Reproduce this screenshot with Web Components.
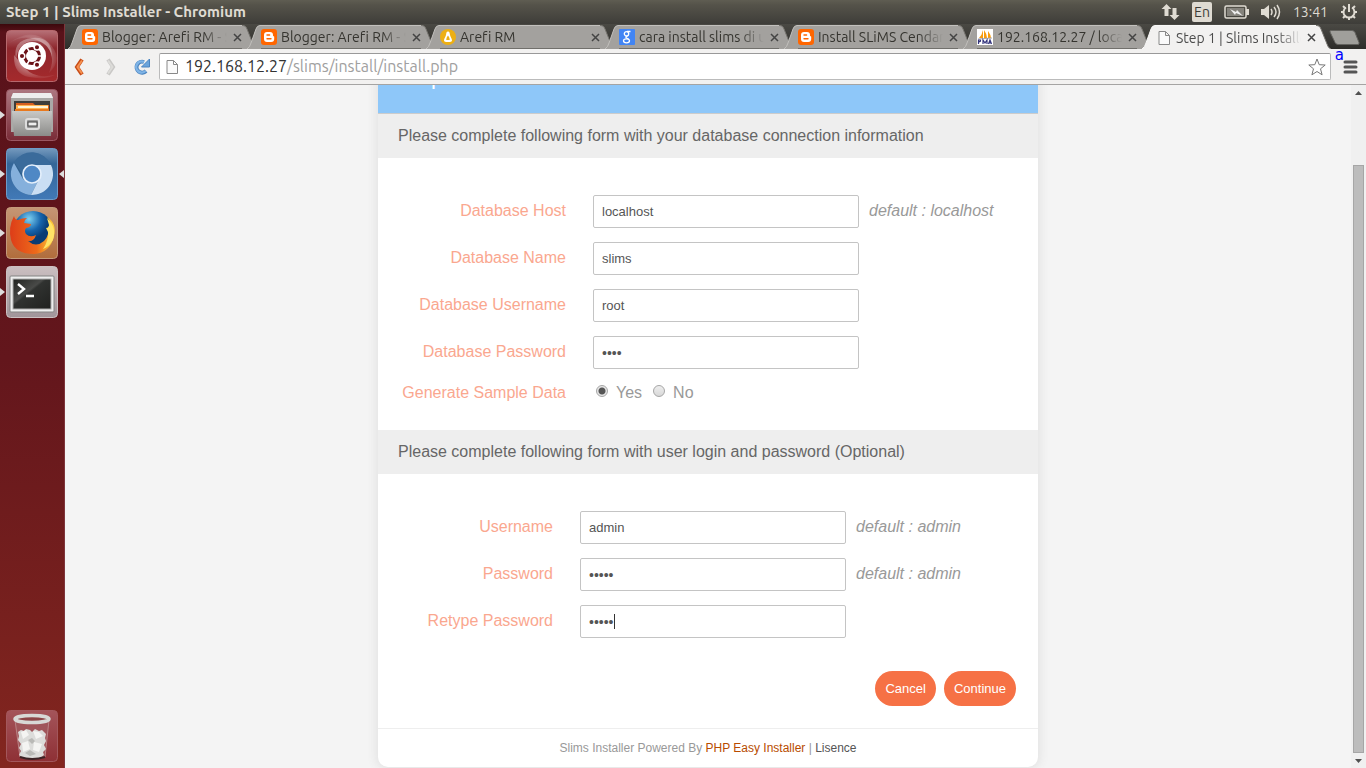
<!DOCTYPE html>
<html lang="en">
<head>
<meta charset="utf-8">
<title>Step 1 | Slims Installer</title>
<style>
	html, body {
		height: 100%;
		margin: 0;
	}
	body {
		display: flex;
		flex-direction: column;
		overflow: hidden;
		background: #f4f4f4;
		font-family: "Liberation Sans", Arial, sans-serif;
		--ui-font: Ubuntu, "Noto Sans", "Open Sans", sans-serif;
	}
	.workspace {
		display: flex;
		flex: 1;
		min-height: 0;
	}
	.browser {
		display: flex;
		flex-direction: column;
		flex: 1;
		min-width: 0;
	}
	.page {
		display: flex;
		flex: 1;
		min-height: 0;
	}
</style>
</head>
<body>

<desktop-panel>Step 1 | Slims Installer - Chromium</desktop-panel>

<div class="workspace">
	<app-launcher>
		<launcher-item icon="ubuntu" label="Dash"></launcher-item>
		<launcher-item icon="files" label="Files" running></launcher-item>
		<launcher-item icon="chromium" label="Chromium" running active></launcher-item>
		<launcher-item icon="firefox" label="Firefox" running></launcher-item>
		<launcher-item icon="terminal" label="Terminal" running></launcher-item>
		<launcher-item icon="trash" label="Trash" slot="bottom"></launcher-item>
	</app-launcher>

	<div class="browser">
		<tab-strip>
			<browser-tab icon="blogger">Blogger: Arefi RM - Semua</browser-tab>
			<browser-tab icon="blogger">Blogger: Arefi RM - Semua</browser-tab>
			<browser-tab icon="linux">Arefi RM</browser-tab>
			<browser-tab icon="google">cara install slims di ubuntu</browser-tab>
			<browser-tab icon="blogger">Install SLiMS Cendana</browser-tab>
			<browser-tab icon="pma">192.168.12.27 / localhost</browser-tab>
			<browser-tab icon="page" active>Step 1 | Slims Installer</browser-tab>
		</tab-strip>
		<browser-toolbar host="192.168.12.27" path="/slims/install/install.php"></browser-toolbar>

		<div class="page">
			<installer-card heading="Step 1">
				<form-section heading="Please complete following form with your database connection information" style="--label-width: 168px">
					<form-row label="Database Host" value="localhost" hint="default : localhost"></form-row>
					<form-row label="Database Name" value="slims"></form-row>
					<form-row label="Database Username" value="root"></form-row>
					<form-row label="Database Password" value="root" type="password"></form-row>
					<radio-row label="Generate Sample Data" options="Yes,No" selected="Yes"></radio-row>
				</form-section>
				<form-section heading="Please complete following form with user login and password (Optional)" style="--label-width: 155px">
					<form-row label="Username" value="admin" hint="default : admin"></form-row>
					<form-row label="Password" value="admin" type="password" hint="default : admin"></form-row>
					<form-row label="Retype Password" value="admin" type="password" editing></form-row>
				</form-section>
				<action-button slot="actions">Cancel</action-button>
				<action-button slot="actions">Continue</action-button>
			</installer-card>
			<page-scrollbar></page-scrollbar>
		</div>
	</div>
</div>

<script>
const icons = {
	blogger: `<svg width="16" height="16" viewBox="0 0 16 16"><rect width="16" height="16" rx="3" fill="#ff6600"/><path d="M6 3h3a3 3 0 0 1 3 3v.6q0 .6.6.6t.6.6V10a3 3 0 0 1-3 3H6a3 3 0 0 1-3-3V6a3 3 0 0 1 3-3z" fill="#fff"/><path d="M6 6h2.600M6 9.800h4" stroke="#ff6600" stroke-width="1.400" stroke-linecap="round"/></svg>`,
	linux: `<svg width="16" height="16" viewBox="0 0 16 16"><circle cx="8" cy="8" r="8" fill="#edaf13"/><path d="M8 2.500c1.600 0 1.700 1.700 2 3.500.3 1.800 2 3.500 2 5.500 0 1.500-1.500 1.500-4 1.500s-4 0-4-1.500c0-2 1.700-3.700 2-5.500.3-1.800.4-3.500 2-3.500z" fill="#fff"/><path d="M8 6.500c1 1.300 1.700 2.800 1.700 4.500H6.300c0-1.700.7-3.200 1.700-4.500z" fill="#edaf13"/></svg>`,
	google: `<svg width="16" height="16" viewBox="0 0 16 16"><rect width="16" height="16" rx="1" fill="#4285f4"/><g fill="none" stroke="#fff" stroke-width="1.300"><ellipse cx="7.500" cy="4.800" rx="2.200" ry="2.200"/><path d="M8 2.500h3.500M8.500 7q-2.500 1-1 2t2.500 1.300"/><ellipse cx="7.500" cy="11.800" rx="3" ry="2"/></g></svg>`,
	pma: `<svg width="16" height="16" viewBox="0 0 16 16"><rect width="16" height="16" fill="#fff"/><path d="M6 1v8H2q3-3 4-8zM7 1q3 4 3 8H7zM11 2q3 4 3 7h-3z" fill="#f89c0e"/><path d="M1 10l14-1" stroke="#aaa"/><path d="M1.500 15v-4h1.800q1 1.500-1.800 2M6 15v-4l2 3 2-3v4M11.500 15l1.500-4 1.500 4m-2.300-1.200h1.700" fill="none" stroke="#34347c" stroke-width="1.200"/></svg>`,
	page: `<svg width="16" height="16" viewBox="0 0 16 16"><path d="M3 1.500h6.500l4 4v9H3zM9.500 1.500v4h4" fill="#fafafa" stroke="#888"/></svg>`,
	ubuntu: `<svg width="52" height="52" viewBox="0 0 52 52"><defs><linearGradient id="a" x2="0" y2="1"><stop stop-color="#b77178"/><stop offset=".35" stop-color="#8e272d"/><stop offset="1" stop-color="#a52a2c"/></linearGradient><radialGradient id="b"><stop offset=".45" stop-color="#fff" stop-opacity=".5"/><stop offset="1" stop-color="#fff" stop-opacity=".08"/></radialGradient></defs><rect x=".5" y=".5" width="51" height="51" rx="4" fill="url(#a)" stroke="#b6686d"/><path d="M2 14Q25-4 42 12t1 31Q52 22 35 12T2 14zM8 25q-1 19 15 22t26-2q-20 4-29-6T8 25z" fill="url(#b)"/><path d="M10 30Q6 10 26 8t20 19Q42 10 27 11T10 30z" fill="#fff" opacity=".3"/><circle cx="26" cy="26" r="14" fill="#fff"/><circle cx="26" cy="26" r="7.500" fill="none" stroke="#6b1217" stroke-width="3.200"/><g stroke="#fff" stroke-width="1.500"><path d="M26 26l11 0M26 26l-6-10M26 26l-6 10"/><circle cx="26" cy="26" r="5" fill="#fff"/><circle cx="16" cy="26" r="2.800" fill="#6b1217"/><circle cx="31" cy="17.300" r="2.800" fill="#6b1217"/><circle cx="31" cy="34.700" r="2.800" fill="#6b1217"/></g></svg>`,
	files: `<svg width="52" height="52" viewBox="0 0 52 52"><defs><linearGradient id="a" x2="0" y2="1"><stop stop-color="#ad7881"/><stop offset="1" stop-color="#792b37"/></linearGradient><linearGradient id="b" x2="0" y2="1"><stop stop-color="#c8c8c6"/><stop offset="1" stop-color="#8b8b89"/></linearGradient></defs><rect x=".5" y=".5" width="51" height="51" rx="4" fill="url(#a)" stroke="#9b5762"/><path d="M7 4h38l2 5v34H5V9z" fill="#aaa9a7"/><path d="M7 4h38l2 5H5z" fill="#eee"/><path d="M8 12h36v12H8z" fill="#3e3d3b"/><path d="M10 14h17l2 2h14v6H10z" fill="#d65f20"/><path d="M10 16h32v6H10z" fill="#ffb452"/><path d="M12 17h30v2H12z" fill="#fff4d8"/><path d="M9 20h34v2H9z" fill="#e8791e"/><path d="M6 22h40l-1 25H8z" fill="url(#b)"/><rect x="20" y="30" width="13" height="10" rx="2" fill="#999" stroke="#ddd" stroke-width="2"/><rect x="22" y="33" width="9" height="4" fill="#eee" stroke="#444"/></svg>`,
	chromium: `<svg width="52" height="52" viewBox="0 0 52 52"><defs><linearGradient id="a" x2="0" y2="1"><stop stop-color="#7499bd"/><stop offset=".3" stop-color="#346698"/><stop offset="1" stop-color="#4179b7"/></linearGradient></defs><rect x=".5" y=".5" width="51" height="51" rx="4" fill="url(#a)" stroke="#6d9bc8"/><circle cx="26" cy="26" r="21" fill="#30618f"/><path d="M8 15A21 21 0 0 0 25 47l8-16q-8 7-16 0z" fill="#85b0dc"/><path d="M26 17h19a21 21 0 0 1-20 30l10-20q1-6-9-10z" fill="#cadef3"/><path d="M8 14A21 21 0 0 1 45 17H26q-8 0-9 10z" fill="#3a6b9b"/><circle cx="26" cy="26" r="9" fill="#4f88c5" stroke="#e4effb" stroke-width="1.700"/></svg>`,
	firefox: `<svg width="52" height="52" viewBox="0 0 52 52"><defs><linearGradient id="a" x2="0" y2="1"><stop stop-color="#c59675"/><stop offset="1" stop-color="#b16d3c"/></linearGradient><radialGradient id="b" cx=".4" cy=".2"><stop stop-color="#7ed2f2"/><stop offset=".6" stop-color="#1664ac"/><stop offset="1" stop-color="#093c74"/></radialGradient><linearGradient id="c"><stop stop-color="#dd3d18"/><stop offset=".6" stop-color="#ee6b1b"/><stop offset="1" stop-color="#ffd43c"/></linearGradient></defs><rect x=".5" y=".5" width="51" height="51" rx="4" fill="url(#a)" stroke="#c49a7c"/><circle cx="27" cy="24" r="20" fill="url(#b)"/><path d="M8 9q1 4 4 4 4-2 9-2-3 2-3 5l7 1q0 3-5 4-2 3 0 6 4 4 10 1-2 7-8 6 8 7 16 0 6-6 4-15 2 1 2 4 2-7-3-13 10 6 7 19-4 17-20 18Q9 47 5 33 2 20 8 9z" fill="url(#c)"/><path d="M41 11q10 9 6 22-5 8-10 9 6-9 5-17l-2-4q3 0 3-3z" fill="#ffe266"/></svg>`,
	terminal: `<svg width="52" height="52" viewBox="0 0 52 52"><defs><linearGradient id="a" x2="0" y2="1"><stop stop-color="#cbbfc1"/><stop offset="1" stop-color="#a1959a"/></linearGradient><linearGradient id="b" x2="1" y2="1"><stop stop-color="#20221f"/><stop offset=".4" stop-color="#494a48"/><stop offset=".45" stop-color="#303230"/><stop offset="1" stop-color="#20211f"/></linearGradient></defs><rect x=".5" y=".5" width="51" height="51" rx="4" fill="url(#a)" stroke="#ccc1c2"/><rect x="4" y="10" width="44" height="36" rx="1" fill="#eee" stroke="#838383"/><rect x="7" y="13" width="38" height="30" fill="url(#b)" stroke="#aaa"/><path d="M12 18l6 5-6 5M20 30h8" fill="none" stroke="#fff" stroke-width="2.400"/></svg>`,
	trash: `<svg width="52" height="52" viewBox="0 0 52 52"><defs><linearGradient id="a" x2="0" y2="1"><stop stop-color="#a4545a"/><stop offset="1" stop-color="#8e3035"/></linearGradient></defs><rect x=".5" y=".5" width="51" height="51" rx="4" fill="url(#a)" stroke="#a3575c"/><path d="M9 10l5 37h25l4-37z" fill="#a0555a" stroke="#b98385"/><path d="M12 22l3-2 3 1 2-2 4 1 2 2 3-3 4 2 3-1 4 4-1 4 1 3-2 4 2 4-3 3 1 3-4 3H17l-4-3 2-4-2-3 2-4-3-4 1-4z" fill="#dcdcda"/><path d="M15 22l5-2 3 5-6 4zM27 21l6 1 4 4-7 3zM16 33l6-2 2 8-7 3zM28 32l8 2-3 8-6-2z" fill="#f4f4f2"/><path d="M22 30l4-2 3 3-3 3zM19 43l5-3 6 4-6 2z" fill="#b9b9b6"/><path d="M14 47q12 4 25 0" fill="none" stroke="#3b2325" stroke-width="2"/><ellipse cx="26" cy="9" rx="17" ry="3.500" fill="#8c4447" stroke="#d8d8d6" stroke-width="3.500"/></svg>`
};

class DesktopPanel extends HTMLElement {
	constructor() {
		super();
		this.attachShadow({ mode: 'open' });
		this.shadowRoot.innerHTML = `
		<style>
		:host {
			display: flex;
			align-items: center;
			justify-content: space-between;
			box-sizing: border-box;
			height: 24px;
			padding: 0 8px 0 6px;
			background: linear-gradient(#5f5d52, #55534a 20%, #3e3d39);
			color: #dfdbd2;
			font: 14px/24px var(--ui-font);
		}
		.title {
			font-size: 15px;
			font-weight: bold;
			white-space: nowrap;
		}
		.indicators {
			display: flex;
			align-items: center;
			gap: 12px;
		}
		.lang {
			width: 20px;
			border-radius: 2px;
			background: #dfdbd2;
			color: #3c3b37;
			line-height: 20px;
			text-align: center;
		}
		</style>
		<div class="title"><slot></slot></div>
		<div class="indicators">
			<svg width="19" height="18" viewBox="0 0 19 18" fill="#dfdbd2"><path d="M5.500 1l5 5h-3v7h-4V6h-3zM13.500 17l-5-5h3V5h4v7h3z"/></svg>
			<span class="lang">En</span>
			<svg width="25" height="14" viewBox="0 0 25 14"><rect x="1" y="1" width="21" height="12" rx="1.500" fill="none" stroke="#dfdbd2" stroke-width="1.500"/><rect x="3" y="3" width="17" height="8" fill="#85837c"/><path d="M22 4h3v6h-3z" fill="#dfdbd2"/><path d="M6 4l6 3 1-2 6 6-7-3-1 2z" fill="#eee"/></svg>
			<svg width="20" height="16" viewBox="0 0 20 16"><path d="M0 5h3l5-4v14l-5-4H0z" fill="#dfdbd2"/><path d="M10 5q2 3 0 6M13 3q4 5 0 10M16 1q5 7 0 14" fill="none" stroke="#dfdbd2" stroke-width="1.500"/></svg>
			<time>13:41</time>
			<svg width="18" height="18" viewBox="0 0 18 18" fill="none" stroke="#dfdbd2" stroke-width="2"><path d="M6 4.500a5.500 5.500 0 1 0 6 0M9 1v8"/><path d="M1 9h3M14 9h3M3 3l2.500 2.500M15 3l-2.500 2.500M3 15l2.500-2.500M15 15l-2.500-2.500M9 14v3"/></svg>
		</div>
		`;
	}
}

class AppLauncher extends HTMLElement {
	constructor() {
		super();
		this.attachShadow({ mode: 'open' });
		this.shadowRoot.innerHTML = `
		<style>
		:host {
			display: flex;
			flex-direction: column;
			justify-content: space-between;
			flex: none;
			box-sizing: border-box;
			width: 65px;
			padding: 6px 0;
			border-right: 1px solid #7e353b;
			background: linear-gradient(#3c080c, #59121a 8px, #63161c 45%, #83261f);
		}
		nav {
			display: flex;
			flex-direction: column;
			gap: 7px;
		}
		</style>
		<nav aria-label="Applications"><slot></slot></nav>
		<nav aria-label="Places"><slot name="bottom"></slot></nav>
		`;
	}
}

class LauncherItem extends HTMLElement {
	connectedCallback() {
		this.attachShadow({ mode: 'open' });
		this.shadowRoot.innerHTML = `
		<style>
		:host {
			display: flex;
			align-items: center;
			height: 52px;
		}
		button {
			padding: 0;
			border: 0;
			background: none;
		}
		svg {
			display: block;
		}
		.mark {
			box-sizing: border-box;
			width: 6px;
			height: 8px;
		}
		:host([running]) .left {
			border: solid transparent;
			border-width: 4px 0 4px 5px;
			border-left-color: #ddd;
		}
		:host([active]) .right {
			border: solid transparent;
			border-width: 4px 5px 4px 0;
			border-right-color: #ddd;
		}
		</style>
		<span class="mark left"></span>
		<button type="button" aria-label="${this.getAttribute('label')}">${icons[this.getAttribute('icon')]}</button>
		<span class="mark right"></span>
		`;
	}
}

class TabStrip extends HTMLElement {
	constructor() {
		super();
		this.attachShadow({ mode: 'open' });
		this.shadowRoot.innerHTML = `
		<style>
		:host {
			display: flex;
			align-items: flex-end;
			box-sizing: border-box;
			height: 25px;
			padding: 0 6px 0 3px;
			background: linear-gradient(#4a4944, #2e2d2a);
		}
		.tabs {
			display: flex;
			flex: 1;
			min-width: 0;
		}
		.new {
			padding: 0;
			border: 0;
			background: none;
			margin: 0 0 4px -4px;
		}
		svg {
			display: block;
		}
		</style>
		<div class="tabs"><slot></slot></div>
		<button class="new" type="button" aria-label="New tab"><svg width="32" height="15" viewBox="0 0 32 15"><path d="M3 .5h21q2 0 3 2l4 10q.5 2-1 2H10q-2 0-3-2L2 2q-.5-1.500 1-1.500z" fill="#a09f9b" stroke="#63625e"/></svg></button>
		`;
	}
}

class BrowserTab extends HTMLElement {
	connectedCallback() {
		this.attachShadow({ mode: 'open' });
		const fill = this.hasAttribute('active') ? '#f2f1f0' : '#a3a19e';
		const edge = this.hasAttribute('active') ? '#f8f8f7' : '#c2c0bd';
		this.shadowRoot.innerHTML = `
		<style>
		:host {
			display: flex;
			flex: 1;
			min-width: 0;
			height: 24px;
			margin-right: -11px;
			color: #35342f;
			font: 14px/24px var(--ui-font);
			font-variant-ligatures: none;
		}
		:host([active]) {
			margin-right: 0;
			color: #4c4c4c;
		}
		svg {
			display: block;
			flex: none;
		}
		.body {
			display: flex;
			align-items: center;
			flex: 1;
			min-width: 0;
			box-sizing: border-box;
			border-top: 1px solid ${edge};
			background: ${fill};
		}
		.text {
			flex: 1;
			min-width: 0;
			margin: 0 6px 0 4px;
			overflow: hidden;
			white-space: nowrap;
			-webkit-mask-image: linear-gradient(to right, #000 calc(100% - 24px), transparent);
		}
		.close {
			padding: 0;
			border: 0;
			background: none;
		}
		:host(:not([active])) .body {
			border-bottom: 1px solid #71706c;
		}
		</style>
		<svg width="14" height="24" viewBox="0 0 14 24"><path d="M0 24Q3 22 4 18L9 4q1-3.500 4-3.500h1V24z" fill="${fill}"/><path d="M0 24Q3 22 4 18L9 4q1-3.500 4-3.500h1" fill="none" stroke="${edge}"/></svg>
		<div class="body">
			${icons[this.getAttribute('icon')]}
			<span class="text"><slot></slot></span>
			<button class="close" type="button" aria-label="Close tab"><svg width="9" height="9" viewBox="0 0 9 9"><path d="M1 1l7 7M8 1L1 8" stroke="#444" stroke-width="1.500"/></svg></button>
		</div>
		<svg width="16" height="24" viewBox="0 0 16 24"><path d="M0 .5h1q3 0 4 3.500l6 15q1 4 4 5H0z" fill="${fill}"/><path d="M0 .5h1q3 0 4 3.500l6 15q1 4 4 5" fill="none" stroke="#777570"/></svg>
		`;
	}
}

class BrowserToolbar extends HTMLElement {
	connectedCallback() {
		this.attachShadow({ mode: 'open' });
		this.shadowRoot.innerHTML = `
		<style>
		:host {
			display: flex;
			align-items: center;
			position: relative;
			box-sizing: border-box;
			height: 36px;
			padding: 0 8px;
			border-bottom: 1px solid #a5a4a3;
			background: #f2f1f0;
		}
		button {
			padding: 0;
			border: 0;
			background: none;
		}
		svg {
			display: block;
		}
		.nav {
			display: flex;
			align-items: center;
			gap: 16px;
			width: 86px;
		}
		.omnibox {
			display: flex;
			align-items: center;
			flex: 1;
			box-sizing: border-box;
			height: 27px;
			margin-right: 12px;
			padding: 0 4px;
			border: 1px solid #bbb;
			border-top: 1px solid #999;
			border-radius: 2px;
			background: #fff;
			color: #a0a0a0;
			font: 16px/24px var(--ui-font);
		}
		.address {
			flex: 1;
			margin: 0 0 2px 5px;
		}
		b {
			color: #333;
			font-weight: normal;
		}
		/* input method hint floating over the menu button */
		.ime {
			position: absolute;
			top: -4px;
			right: 22px;
			color: #0000ff;
			font: 15px/20px "DejaVu Sans", sans-serif;
		}
		</style>
		<div class="nav">
			<button type="button" aria-label="Back"><svg width="14" height="18" viewBox="0 0 14 18"><path d="M9 1.500L4 9l5 7.500" fill="none" stroke="#c74b16" stroke-width="4"/><path d="M9 2.500L4.500 9 9 15.500" fill="none" stroke="#f69150" stroke-width="2"/></svg></button>
			<button type="button" aria-label="Forward"><svg width="14" height="18" viewBox="0 0 14 18"><path d="M5 1.500L10 9l-5 7.500" fill="none" stroke="#c9c8c6" stroke-width="4"/><path d="M5 2.500L9.500 9 5 15.500" fill="none" stroke="#dddcd9" stroke-width="2"/></svg></button>
			<button type="button" aria-label="Reload"><svg width="18" height="18" viewBox="0 0 18 18"><path d="M13 13A5.500 5.500 0 1 1 11 4" fill="none" stroke="#4c85c0" stroke-width="4"/><path d="M16.500 1v8h-8z" fill="#6aa4dc" stroke="#4c85c0"/><path d="M12.500 13A5.500 5.500 0 1 1 11 4" fill="none" stroke="#7fb4e6" stroke-width="2.400"/></svg></button>
		</div>
		<div class="omnibox">
			${icons.page}
			<span class="address"><b>${this.getAttribute('host')}</b>${this.getAttribute('path')}</span>
			<button type="button" aria-label="Bookmark"><svg width="18" height="18" viewBox="0 0 18 18"><path d="M9 1l2.200 5.700 6 .3-4.700 3.800 1.600 6L9 13.500l-5.100 3.300 1.600-6L.8 7l6-.3z" fill="#fff" stroke="#777"/></svg></button>
		</div>
		<button type="button" aria-label="Menu"><svg width="15" height="14" viewBox="0 0 15 14"><path d="M2 2h11M2 7h11M2 12h11" stroke="#555" stroke-width="3" stroke-linecap="round"/></svg></button>
		<span class="ime">a</span>
		`;
	}
}

class InstallerCard extends HTMLElement {
	connectedCallback() {
		this.attachShadow({ mode: 'open' });
		this.shadowRoot.innerHTML = `
		<style>
		:host {
			display: block;
			flex: 1;
			min-width: 0;
			overflow: hidden;
			background: #f4f4f4;
		}
		/* the page is scrolled, so most of the heading sits above the window */
		.card {
			max-width: 660px;
			margin: -32px auto 0;
			border-radius: 10px;
			background: #fff;
			box-shadow: 0 0 10px 2px #e2e2e2;
			overflow: hidden;
		}
		h1 {
			margin: 0;
			height: 60px;
			padding: 0 20px;
			border-bottom: 1px solid #ccc;
			background: #8ec7f9;
			color: #fff;
			font-size: 22px;
			font-weight: normal;
			line-height: 48px;
		}
		.actions {
			display: flex;
			justify-content: flex-end;
			gap: 8px;
			padding: 6px 22px 22px;
		}
		footer {
			border-top: 1px solid #eee;
			color: #999;
			font-size: 12px;
			line-height: 38px;
			text-align: center;
		}
		a {
			color: #555;
			text-decoration: none;
		}
		a.brand {
			color: #b84c00;
		}
		</style>
		<form class="card">
			<h1>${this.getAttribute('heading')}</h1>
			<slot></slot>
			<div class="actions"><slot name="actions"></slot></div>
			<footer>Slims Installer Powered By <a class="brand" href="#">PHP Easy Installer</a> | <a href="#">Lisence</a></footer>
		</form>
		`;
	}
}

class FormSection extends HTMLElement {
	connectedCallback() {
		this.attachShadow({ mode: 'open' });
		this.shadowRoot.innerHTML = `
		<style>
		:host {
			display: block;
		}
		h2 {
			margin: 0;
			padding: 0 20px;
			background: #eee;
			color: #666;
			font-size: 16px;
			font-weight: normal;
			line-height: 44px;
		}
		.rows {
			padding: 30px 20px 20px;
		}
		</style>
		<h2>${this.getAttribute('heading')}</h2>
		<div class="rows"><slot></slot></div>
		`;
	}
}

const rowStyle = `
	:host {
		display: flex;
		align-items: center;
		color: #999;
		font-size: 16px;
		line-height: 20px;
	}
	.label {
		width: var(--label-width);
		margin-right: 27px;
		color: #faa78f;
		text-align: right;
	}
`;

class FormRow extends HTMLElement {
	connectedCallback() {
		this.attachShadow({ mode: 'open' });
		const hint = this.getAttribute('hint');
		this.shadowRoot.innerHTML = `
		<style>
		${rowStyle}
		:host {
			height: 47px;
		}
		.label, em {
			padding-bottom: 2px;
		}
		input {
			box-sizing: border-box;
			width: 266px;
			height: 33px;
			padding: 0 8px;
			border: 1px solid #c4c4c4;
			border-radius: 2px;
			background: #fff;
			color: #555;
			font: 13px "Liberation Sans", Arial, sans-serif;
			outline: 0;
		}
		input[type="password"] {
			font-size: 14px;
		}
		/* text cursor of the field being edited */
		:host([editing]) input {
			background: linear-gradient(#333, #333) 33px 8px / 1px 15px no-repeat #fff;
		}
		em {
			margin-left: 10px;
		}
		</style>
		<label class="label" for="field">${this.getAttribute('label')}</label>
		<input id="field" type="${this.getAttribute('type') || 'text'}" value="${this.getAttribute('value')}">
		${hint ? `<em>${hint}</em>` : ''}
		`;
	}
}

class RadioRow extends HTMLElement {
	connectedCallback() {
		this.attachShadow({ mode: 'open' });
		const options = this.getAttribute('options').split(',').map(name => `
			<input type="radio" name="choice" id="${name}" ${name === this.getAttribute('selected') ? 'checked' : ''}>
			<label for="${name}">${name}</label>
		`).join('');
		this.shadowRoot.innerHTML = `
		<style>
		${rowStyle}
		:host {
			height: 34px;
		}
		.options {
			display: flex;
			align-items: center;
			padding-left: 3px;
		}
		input {
			appearance: none;
			width: 12px;
			height: 12px;
			margin: 0 8px 4px 0;
			border: 1px solid #a6a6a6;
			border-radius: 50%;
			background: linear-gradient(#eee, #d8d8d8);
		}
		input:checked {
			background: radial-gradient(#555 3px, #e6e6e6 4px);
		}
		.options label {
			margin-right: 11px;
		}
		</style>
		<span class="label" id="caption">${this.getAttribute('label')}</span>
		<div class="options" role="radiogroup" aria-labelledby="caption">${options}</div>
		`;
	}
}

class ActionButton extends HTMLElement {
	constructor() {
		super();
		this.attachShadow({ mode: 'open' });
		this.shadowRoot.innerHTML = `
		<style>
		:host {
			display: block;
		}
		button {
			display: block;
			height: 35px;
			padding: 0 10px;
			border: 0;
			border-radius: 18px;
			background: #f67145;
			color: #fff;
			font: 13px "Liberation Sans", Arial, sans-serif;
		}
		</style>
		<button type="button"><slot></slot></button>
		`;
	}
}

class PageScrollbar extends HTMLElement {
	constructor() {
		super();
		this.attachShadow({ mode: 'open' });
		this.shadowRoot.innerHTML = `
		<style>
		:host {
			display: flex;
			flex-direction: column;
			align-items: center;
			flex: none;
			width: 15px;
			background: #f0f0f0;
		}
		svg {
			display: block;
		}
		.track {
			display: flex;
			align-items: flex-end;
			flex: 1;
		}
		.thumb {
			box-sizing: border-box;
			width: 11px;
			height: 90%;
			border: 1px solid #a6a6a6;
			background: #bcbcbc;
		}
		</style>
		<svg width="15" height="15" viewBox="0 0 15 15"><path d="M4 10l3.500-4L11 10z" fill="#505050"/></svg>
		<div class="track"><div class="thumb"></div></div>
		<svg width="15" height="15" viewBox="0 0 15 15"><path d="M4 6l3.500 4L11 6z" fill="#505050"/></svg>
		`;
	}
}

customElements.define('desktop-panel', DesktopPanel);
customElements.define('app-launcher', AppLauncher);
customElements.define('launcher-item', LauncherItem);
customElements.define('tab-strip', TabStrip);
customElements.define('browser-tab', BrowserTab);
customElements.define('browser-toolbar', BrowserToolbar);
customElements.define('installer-card', InstallerCard);
customElements.define('form-section', FormSection);
customElements.define('form-row', FormRow);
customElements.define('radio-row', RadioRow);
customElements.define('action-button', ActionButton);
customElements.define('page-scrollbar', PageScrollbar);
</script>
</body>
</html>
